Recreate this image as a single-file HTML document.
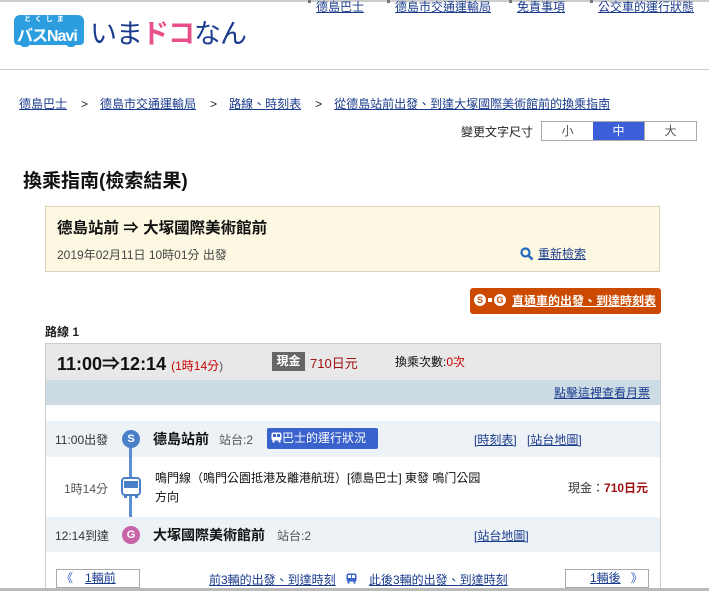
<!DOCTYPE html>
<html style="width:709px;height:591px;overflow:hidden"><head><meta charset="utf-8">
<style>
*{margin:0;padding:0;box-sizing:border-box}
body{width:709px;height:591px;position:relative;overflow:hidden;background:#fff;font-family:"Liberation Sans","Noto Sans CJK TC",sans-serif;font-size:12px;color:#222}
.a{position:absolute;white-space:nowrap}
a,.lk{color:#1a3b8c;text-decoration:underline}
.top a{font-size:12px}
.sq{display:inline-block;width:3px;height:3px;background:#777;vertical-align:top;margin-right:5px;margin-top:2px}
.gt{margin:0 12px 0 14px}
</style></head><body>
<div class="a" style="left:0;top:0;width:709px;height:2px;background:#ccc"></div>
<!-- logo -->
<div class="a" style="left:14px;top:15px;width:70px;height:30px;background:#2c9ee0;border-radius:6px 6px 4px 4px"></div>
<div class="a" style="left:20px;top:42px;width:10px;height:5px;background:#2c9ee0;border-radius:0 0 4px 4px"></div>
<div class="a" style="left:66px;top:42px;width:10px;height:5px;background:#2c9ee0;border-radius:0 0 4px 4px"></div>
<div class="a" style="left:24px;top:14px;font-size:7px;color:#fff;font-weight:bold;letter-spacing:4px">とくしま</div>
<div class="a" style="left:17px;top:22px;font-size:16px;color:#fff;font-weight:bold;letter-spacing:-1px">バスNavi</div>
<div class="a" style="left:90px;top:12px;font-size:27px;color:#1c3d8f;letter-spacing:-1px">いま<span style="color:#e8508b;font-weight:bold">ドコ</span>なん</div>
<!-- top links -->
<div class="a top" style="left:308px;top:-2px"><span class="sq"></span><a>德島巴士</a></div>
<div class="a top" style="left:387px;top:-2px"><span class="sq"></span><a>德島市交通運輸局</a></div>
<div class="a top" style="left:509px;top:-2px"><span class="sq"></span><a>免責事項</a></div>
<div class="a top" style="left:590px;top:-2px"><span class="sq"></span><a>公交車的運行狀態</a></div>
<div class="a" style="left:0;top:69px;width:709px;height:1px;background:#ccc"></div>
<!-- breadcrumb -->
<div class="a" style="left:19px;top:95px;font-size:12px"><a>德島巴士</a><span class="gt">&gt;</span><a>德島市交通運輸局</a><span class="gt">&gt;</span><a>路線、時刻表</a><span class="gt">&gt;</span><a>從德島站前出發、到達大塚國際美術館前的換乘指南</a></div>
<div class="a" style="left:461px;top:123px;font-size:12px">變更文字尺寸</div>
<div class="a" style="left:541px;top:121px;width:156px;height:20px;border:1px solid #aaa;display:flex;font-size:12px;line-height:18px;text-align:center;color:#555">
<div style="flex:1">小</div><div style="flex:1;background:#3a5fd8;color:#fff">中</div><div style="flex:1;border-left:1px solid #aaa">大</div></div>
<div class="a" style="left:23px;top:166px;font-size:19px;font-weight:bold;color:#111">換乘指南(檢索結果)</div>
<!-- search box -->
<div class="a" style="left:45px;top:206px;width:615px;height:66px;background:#fdf8e2;border:1px solid #d8d2b8"></div>
<div class="a" style="left:57px;top:216px;font-size:15.5px;font-weight:bold;color:#111">德島站前 ⇒ 大塚國際美術館前</div>
<div class="a" style="left:57px;top:246px;font-size:12px;color:#444">2019年02月11日 10時01分 出發</div>
<svg class="a" style="left:520px;top:247px" width="14" height="14" viewBox="0 0 14 14"><circle cx="5.5" cy="5.5" r="4" fill="none" stroke="#2468c0" stroke-width="2.2"/><line x1="8.5" y1="8.5" x2="12.5" y2="12.5" stroke="#2468c0" stroke-width="2.5"/></svg>
<div class="a lk" style="left:538px;top:245px;font-size:12px">重新檢索</div>
<!-- orange button -->
<div class="a" style="left:470px;top:288px;width:191px;height:26px;background:#cc4a00;border-radius:3px"></div>
<div class="a" style="left:474px;top:294px;width:12px;height:12px;border-radius:50%;background:#fff;color:#cc4a00;font-size:9px;font-weight:bold;text-align:center;line-height:12px">S</div>
<div class="a" style="left:488px;top:298px;width:4px;height:4px;background:#fff"></div>
<div class="a" style="left:494px;top:294px;width:12px;height:12px;border-radius:50%;background:#fff;color:#cc4a00;font-size:9px;font-weight:bold;text-align:center;line-height:12px">G</div>
<div class="a" style="left:512px;top:292px;font-size:12px;font-weight:bold;color:#fff;text-decoration:underline">直通車的出發、到達時刻表</div>
<div class="a" style="left:45px;top:323px;font-size:12px;font-weight:bold">路線 1</div>
<!-- route box -->
<div class="a" style="left:45px;top:343px;width:616px;height:260px;border:1px solid #ccc;border-bottom:none"></div>
<div class="a" style="left:46px;top:344px;width:614px;height:36px;background:#e8e8e8"></div>
<div class="a" style="left:57px;top:350px;font-size:18px;font-weight:bold;color:#111">11:00⇒12:14 <span style="font-size:12px;font-weight:normal;color:#c00">(1時14分</span><span style="font-size:12px;font-weight:normal;color:#555">)</span></div>
<div class="a" style="left:272px;top:352px;width:33px;height:19px;background:#666;color:#fff;font-size:12px;font-weight:bold;text-align:center;line-height:19px">現金</div>
<div class="a" style="left:310px;top:353px;font-size:13px;color:#a01010">710日元</div>
<div class="a" style="left:395px;top:353px;font-size:12px;color:#111">換乘次數:<span style="color:#c00">0次</span></div>
<div class="a" style="left:46px;top:380px;width:614px;height:25px;background:#cddbe5"></div>
<div class="a lk" style="left:554px;top:384px;font-size:12px">點擊這裡查看月票</div>
<!-- stop 1 -->
<div class="a" style="left:46px;top:421px;width:614px;height:36px;background:#edf2f6"></div>
<div class="a" style="left:55px;top:431px;font-size:12px;color:#333">11:00出發</div>
<div class="a" style="left:129px;top:440px;width:3px;height:88px;background:#5b8ed6"></div>
<div class="a" style="left:122px;top:430px;width:18px;height:18px;border-radius:50%;background:#4a80c8;color:#fff;font-size:11px;font-weight:bold;text-align:center;line-height:18px">S</div>
<div class="a" style="left:153px;top:429px;font-size:14px;font-weight:bold;color:#111">德島站前</div>
<div class="a" style="left:219px;top:431px;font-size:12px;color:#555">站台:2</div>
<div class="a" style="left:267px;top:428px;width:111px;height:21px;background:#3a62cc;border-radius:2px;color:#fff;font-size:12px;line-height:21px;padding-left:4px">
<svg width="11" height="11" viewBox="0 0 11 11" style="vertical-align:-1px"><rect x="0.5" y="0.5" width="10" height="8" rx="2" fill="#fff"/><rect x="2" y="2" width="3" height="3" fill="#3a62cc"/><rect x="6" y="2" width="3" height="3" fill="#3a62cc"/><rect x="1.5" y="8.5" width="2" height="2" fill="#fff"/><rect x="7.5" y="8.5" width="2" height="2" fill="#fff"/></svg>巴士的運行狀況</div>
<div class="a lk" style="left:474px;top:431px;font-size:12px">[時刻表]</div>
<div class="a lk" style="left:527px;top:431px;font-size:12px">[站台地圖]</div>
<!-- middle -->
<div class="a" style="left:64px;top:480px;font-size:12px;color:#555">1時14分</div>
<svg class="a" style="left:121px;top:477px" width="20" height="22" viewBox="0 0 20 22"><rect x="1" y="1" width="18" height="17" rx="3" fill="#fff" stroke="#4a80c8" stroke-width="2"/><rect x="3" y="4" width="14" height="7" fill="#4a80c8"/><rect x="3" y="18" width="3" height="3" fill="#4a80c8"/><rect x="14" y="18" width="3" height="3" fill="#4a80c8"/></svg>
<div class="a" style="left:155px;top:469px;font-size:12px;color:#111;line-height:19px">鳴門線（鳴門公園抵港及離港航班）[德島巴士] 東發 鳴门公园<br>方向</div>
<div class="a" style="left:568px;top:479px;font-size:12px;color:#333">現金：<b style="color:#a01010">710日元</b></div>
<!-- stop 2 -->
<div class="a" style="left:46px;top:517px;width:614px;height:35px;background:#edf2f6"></div>
<div class="a" style="left:55px;top:527px;font-size:12px;color:#333">12:14到達</div>
<div class="a" style="left:122px;top:526px;width:18px;height:18px;border-radius:50%;background:#c864a8;color:#fff;font-size:11px;font-weight:bold;text-align:center;line-height:18px">G</div>
<div class="a" style="left:153px;top:525px;font-size:14px;font-weight:bold;color:#111">大塚國際美術館前</div>
<div class="a" style="left:277px;top:527px;font-size:12px;color:#555">站台:2</div>
<div class="a lk" style="left:474px;top:527px;font-size:12px">[站台地圖]</div>
<!-- nav -->
<div class="a" style="left:56px;top:569px;width:84px;height:19px;border:1px solid #aaa;font-size:12px;line-height:17px"><span style="color:#3a62cc;margin-left:4px">《</span><span class="lk" style="margin-left:12px">1輛前</span></div>
<div class="a lk" style="left:209px;top:571px;font-size:12px">前3輛的出發、到達時刻</div>
<svg class="a" style="left:346px;top:573px" width="11" height="11" viewBox="0 0 11 11"><rect x="0.5" y="0.5" width="10" height="8" rx="2" fill="#3a62cc"/><rect x="2" y="2" width="3" height="3" fill="#fff"/><rect x="6" y="2" width="3" height="3" fill="#fff"/><rect x="1.5" y="8.5" width="2" height="2" fill="#3a62cc"/><rect x="7.5" y="8.5" width="2" height="2" fill="#3a62cc"/></svg>
<div class="a lk" style="left:369px;top:571px;font-size:12px">此後3輛的出發、到達時刻</div>
<div class="a" style="left:565px;top:569px;width:84px;height:19px;border:1px solid #aaa;font-size:12px;line-height:17px"><span class="lk" style="margin-left:24px">1輛後</span><span style="color:#3a62cc;margin-left:10px">》</span></div>
<div class="a" style="left:0;top:588px;width:709px;height:3px;background:#bbb"></div>
</body></html>
